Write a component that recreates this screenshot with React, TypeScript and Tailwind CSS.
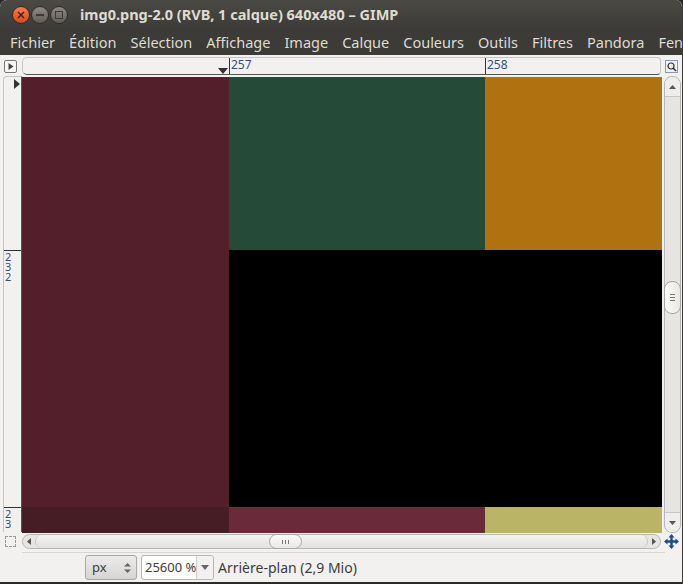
import React from "react";

const menu = ["Fichier", "Édition", "Sélection", "Affichage", "Image", "Calque", "Couleurs", "Outils", "Filtres", "Pandora", "Fenêtres"];

function TitleButtons() {
  return (
    <div className="flex items-center gap-[1px] pl-[12px]">
      <div className="w-[18px] h-[18px] rounded-full bg-gradient-to-b from-[#f47c4e] to-[#d9461b] border border-[#2e2d29] flex items-center justify-center">
        <svg width="8" height="8" viewBox="0 0 8 8">
          <path d="M1 1L7 7M7 1L1 7" stroke="#4a1a0a" strokeWidth="1.4" />
        </svg>
      </div>
      <div className="w-[18px] h-[18px] rounded-full bg-gradient-to-b from-[#8c8a83] to-[#5f5d57] border border-[#2e2d29] flex items-center justify-center">
        <div className="w-[8px] h-[2px] bg-[#3a3935]" />
      </div>
      <div className="w-[18px] h-[18px] rounded-full bg-gradient-to-b from-[#8c8a83] to-[#5f5d57] border border-[#2e2d29] flex items-center justify-center">
        <div className="w-[8px] h-[8px] border-[1.5px] border-[#3a3935]" />
      </div>
    </div>
  );
}

export default function App() {
  return (
    <div className="w-[683px] h-[584px] bg-[#2b2a27] overflow-hidden" style={{ fontFamily: "'Noto Sans', 'DejaVu Sans', sans-serif" }}>
      <div className="w-full h-full rounded-t-[7px] overflow-hidden flex flex-col bg-[#f2f1f0] border-r border-[#3c3b37]">
        {/* titlebar */}
        <div className="h-[30px] bg-gradient-to-b from-[#4a4944] to-[#3c3b37] flex items-center shrink-0">
          <TitleButtons />
          <span className="ml-[12px] text-[14.5px] font-bold text-[#dfdbd2] whitespace-nowrap">
            img0.png-2.0 (RVB, 1 calque) 640x480 – GIMP
          </span>
        </div>
        {/* menubar */}
        <div className="h-[25px] bg-[#3c3b37] flex items-center pl-[3px] shrink-0 whitespace-nowrap overflow-hidden">
          {menu.map((m) => (
            <span key={m} className="px-[7px] text-[14.5px] text-[#dfdbd2] leading-none shrink-0">
              {m}
            </span>
          ))}
        </div>

        {/* ruler row */}
        <div className="h-[20px] flex items-center mt-[1px] shrink-0">
          <div className="w-[22px] flex justify-center">
            <div className="w-[13px] h-[13px] border border-[#777] rounded-[2px] bg-[#f6f6f5] flex items-center justify-center">
              <svg width="6" height="7" viewBox="0 0 6 7"><path d="M0.5 0L5.5 3.5L0.5 7Z" fill="#444" /></svg>
            </div>
          </div>
          <div className="relative w-[640px] h-[18px] border border-[#c8c6c2] border-b-[#555] rounded-l-[5px] rounded-r-[4px] bg-[#f2f1f0]">
            <div className="absolute left-[206px] top-0 h-full border-l border-[#333]" />
            <span className="absolute left-[208px] top-[-2px] text-[12px] text-[#34507e]">257</span>
            <div className="absolute left-[462px] top-0 h-full border-l border-[#333]" />
            <span className="absolute left-[464px] top-[-2px] text-[12px] text-[#34507e]">258</span>
            <svg className="absolute left-[195px] bottom-[0px]" width="10" height="6" viewBox="0 0 10 6"><path d="M0 0H10L5 6Z" fill="#333" /></svg>
          </div>
          <div className="w-[21px] flex justify-center">
            <svg width="13" height="13" viewBox="0 0 13 13">
              <rect x="0.5" y="0.5" width="12" height="12" fill="none" stroke="#1d3f8a" strokeDasharray="1 1" />
              <circle cx="6" cy="6" r="3" fill="none" stroke="#333" strokeWidth="1.2" />
              <path d="M8 8L11 11" stroke="#333" strokeWidth="1.6" />
            </svg>
          </div>
        </div>

        {/* canvas row */}
        <div className="flex h-[457px] shrink-0">
          <div className="w-[22px] pl-[3px] pb-[1px]">
            <div className="relative w-[19px] h-full border-l border-t border-[#c8c6c2] border-r-[#555] border-r rounded-tl-[4px] bg-[#f2f1f0]">
              <svg className="absolute right-[1px] top-[2px]" width="6" height="10" viewBox="0 0 6 10"><path d="M0 0L6 5L0 10Z" fill="#333" /></svg>
              <div className="absolute left-0 right-0 top-[173px] border-t border-[#333]" />
              <div className="absolute left-[1px] top-[175px] flex flex-col text-[11px] leading-[10px] text-[#34507e]">
                <span className="h-[10px]">2</span><span className="h-[10px]">3</span><span className="h-[10px]">2</span>
              </div>
              <div className="absolute left-0 right-0 top-[430px] border-t border-[#333]" />
              <div className="absolute left-[1px] top-[432px] flex flex-col text-[11px] leading-[10px] text-[#34507e]">
                <span className="h-[10px]">2</span><span className="h-[10px]">3</span>
              </div>
            </div>
          </div>
          <div className="grid grid-cols-[207px_256px_177px] grid-rows-[173px_257px_26px] w-[640px] h-[456px] mt-[1px]">
            <div className="row-span-2 bg-[#521f2a]" />
            <div className="bg-[#254a37]" />
            <div className="bg-[#b07210]" />
            <div className="col-span-2 bg-black" />
            <div className="bg-[#461d24]" />
            <div className="bg-[#6b2a3a]" />
            <div className="bg-[#bab466]" />
          </div>
          {/* vertical scrollbar */}
          <div className="w-[21px] flex justify-center">
            <div className="relative w-[17px] h-full border border-[#b8b6b2] rounded-[8px] bg-[#e6e5e3] flex flex-col">
              <div className="h-[20px] flex items-center justify-center border-b border-[#c8c6c2] rounded-t-[8px] bg-[#efeeec]">
                <svg width="7" height="4" viewBox="0 0 7 4"><path d="M0 4L3.5 0L7 4Z" fill="#555" /></svg>
              </div>
              <div className="flex-1" />
              <div className="h-[20px] flex items-center justify-center border-t border-[#c8c6c2] rounded-b-[8px] bg-[#efeeec]">
                <svg width="7" height="4" viewBox="0 0 7 4"><path d="M0 0L3.5 4L7 0Z" fill="#555" /></svg>
              </div>
              <div className="absolute left-[-1px] top-[204px] w-[17px] h-[33px] rounded-[8px] border border-[#a9a7a3] bg-gradient-to-r from-[#fbfbfa] to-[#e9e8e6] flex flex-col items-center justify-center gap-[2px]">
                <div className="w-[5px] h-[1px] bg-[#777]" />
                <div className="w-[5px] h-[1px] bg-[#777]" />
                <div className="w-[5px] h-[1px] bg-[#777]" />
              </div>
            </div>
          </div>
        </div>

        {/* horizontal scrollbar row */}
        <div className="h-[17px] flex items-center shrink-0">
          <div className="w-[22px] flex justify-center">
            <div className="w-[11px] h-[11px] border border-dashed border-[#999]" />
          </div>
          <div className="relative w-[640px] h-[15px] border border-[#b8b6b2] rounded-[8px] bg-[#e6e5e3] flex">
            <div className="w-[12px] flex items-center justify-center">
              <svg width="4" height="7" viewBox="0 0 4 7"><path d="M4 0L0 3.5L4 7Z" fill="#555" /></svg>
            </div>
            <div className="flex-1 rounded-[8px] border-l border-r border-[#c8c6c2] bg-gradient-to-b from-[#f3f3f2] to-[#e2e1df]" />
            <div className="w-[12px] flex items-center justify-center">
              <svg width="4" height="7" viewBox="0 0 4 7"><path d="M0 0L4 3.5L0 7Z" fill="#555" /></svg>
            </div>
            <div className="absolute left-[246px] top-[-1px] w-[33px] h-[15px] rounded-[8px] border border-[#a9a7a3] bg-gradient-to-b from-[#fbfbfa] to-[#e9e8e6] flex items-center justify-center gap-[2px]">
              <div className="w-[1px] h-[4px] bg-[#777]" />
              <div className="w-[1px] h-[4px] bg-[#777]" />
              <div className="w-[1px] h-[4px] bg-[#777]" />
            </div>
          </div>
          <div className="w-[21px] flex justify-center">
            <svg width="15" height="15" viewBox="0 0 15 15">
              <path d="M7.5 0L10.5 3.5H8.7V6.3H11.5V4.5L15 7.5L11.5 10.5V8.7H8.7V11.5H10.5L7.5 15L4.5 11.5H6.3V8.7H3.5V10.5L0 7.5L3.5 4.5V6.3H6.3V3.5H4.5Z" fill="#1d4a8f" />
            </svg>
          </div>
        </div>

        <div className="mx-[22px] mr-[17px] border-t border-[#d8d6d2] mt-[2px] shrink-0" />

        {/* status bar */}
        <div className="flex-1 flex items-center pl-[85px] gap-[4px]">
          <div className="w-[52px] h-[25px] rounded-[3px] border border-[#a9a7a3] bg-gradient-to-b from-[#ecebea] to-[#d6d5d3] flex items-center justify-between pl-[6px] pr-[5px] text-[13px] text-[#3c3c3c]">
            <span>px</span>
            <svg width="7" height="12" viewBox="0 0 7 12"><path d="M0 4.5L3.5 1L7 4.5Z M0 7.5L3.5 11L7 7.5Z" fill="#666" /></svg>
          </div>
          <div className="w-[73px] h-[25px] rounded-[3px] border border-[#b8b6b2] bg-white flex items-center text-[13px] text-[#3c3c3c]">
            <span className="pl-[3px] w-[54px] whitespace-nowrap">25600 %</span>
            <div className="h-full flex-1 border-l border-[#d0cecb] bg-[#f2f1f0] flex items-center justify-center rounded-r-[3px]">
              <svg width="8" height="5" viewBox="0 0 8 5"><path d="M0 0H8L4 5Z" fill="#666" /></svg>
            </div>
          </div>
          <span className="text-[14px] text-[#3c3c3c] whitespace-nowrap">Arrière-plan (2,9 Mio)</span>
        </div>
        <div className="h-[2px] bg-[#2b2a27] shrink-0" />
      </div>
    </div>
  );
}
